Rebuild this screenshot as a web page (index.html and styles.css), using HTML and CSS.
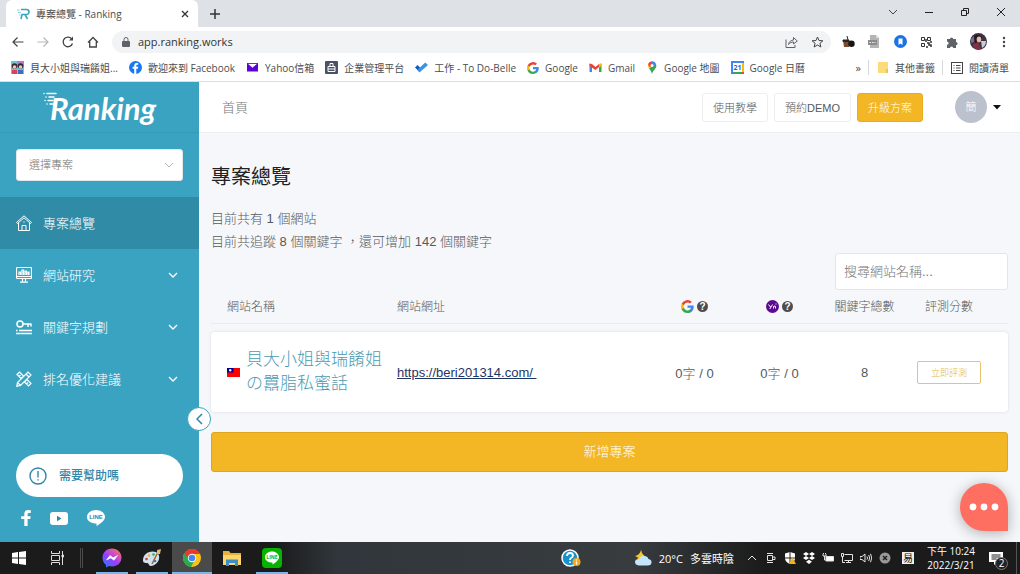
FILE: index.html
```html
<!DOCTYPE html>
<html lang="zh-Hant">
<head>
  <meta charset="UTF-8" />
  <meta name="viewport" content="width=device-width, initial-scale=1.0"/>
  <title>專案總覽 - Ranking</title>
  <link rel="stylesheet" href="styles.css">
</head>
<body>
  <!-- Browser -->
  <header class="browser">
    <div class="tab-strip">
      <div class="tab">
        <svg width="13" height="12" viewBox="0 0 13 12" fill="none" stroke="#3aa3c2" stroke-width="1.6"><path d="M4 1.5h5.500a2.200 2.200 0 0 1 0 5H5L4 11M8 6.500l2.500 4.500"/><path d="M0 2h2.500M1 4.500h3M2 7h1.500" stroke="#8fcbdc" stroke-width="1"/></svg>
        <span class="tab-title">專案總覽 - Ranking</span>
        <button class="plain" aria-label="Close tab"><svg width="8" height="8" viewBox="0 0 8 8" stroke="#333" stroke-width="1.3"><path d="M1 1l6 6M7 1L1 7"/></svg></button>
      </div>
      <button class="plain new-tab" aria-label="New tab"><svg width="10" height="10" viewBox="0 0 10 10" stroke="#333" stroke-width="1.5"><path d="M5 0v10M0 5h10"/></svg></button>
      <div class="window-buttons">
        <button class="plain" aria-label="Search tabs"><svg width="10" height="10" viewBox="0 0 10 10" fill="none" stroke="#444"><path d="M1 3l4 4 4-4"/></svg></button>
        <button class="plain" aria-label="Minimize"><svg width="10" height="10" viewBox="0 0 10 10" stroke="#222"><path d="M1 5.500h8"/></svg></button>
        <button class="plain" aria-label="Restore"><svg width="10" height="10" viewBox="0 0 10 10" fill="none" stroke="#222"><path d="M1.500 3.500h5v5h-5zM3.500 3.500v-2h5v5h-2"/></svg></button>
        <button class="plain" aria-label="Close"><svg width="10" height="10" viewBox="0 0 10 10" stroke="#222"><path d="M1 1l8 8M9 1L1 9"/></svg></button>
      </div>
    </div>

    <div class="toolbar">
      <div class="nav-buttons">
        <button class="plain" aria-label="Back"><svg width="12" height="12" viewBox="0 0 12 12" fill="none" stroke="#444" stroke-width="1.2"><path d="M11.500 6H1M5.500 1.500L1 6l4.500 4.500"/></svg></button>
        <button class="plain" aria-label="Forward"><svg width="12" height="12" viewBox="0 0 12 12" fill="none" stroke="#b5b7ba" stroke-width="1.2"><path d="M.5 6H11M6.500 1.500L11 6l-4.500 4.500"/></svg></button>
        <button class="plain" aria-label="Reload"><svg width="12" height="12" viewBox="0 0 12 12" fill="none" stroke="#444" stroke-width="1.3"><path d="M10.500 7.500A4.800 4.800 0 1 1 10 3.300"/><path d="M11 .5V4.500H7z" fill="#444" stroke="none"/></svg></button>
        <button class="plain" aria-label="Home"><svg width="12" height="12" viewBox="0 0 12 12" fill="none" stroke="#444" stroke-width="1.3"><path d="M1 6.500L6 1.500l5 5M2.700 5.500V11h6.600V5.500"/></svg></button>
      </div>
      <div class="omnibox">
        <svg width="8" height="10" viewBox="0 0 8 10"><rect y="4" width="8" height="6" rx="1" fill="#5f6368"/><path d="M2 4V2.500a2 2 0 0 1 4 0V4" fill="none" stroke="#5f6368"/></svg>
        <input type="text" value="app.ranking.works" aria-label="Address">
        <button class="plain" aria-label="Share"><svg width="13" height="12" viewBox="0 0 13 12" fill="none" stroke="#5f6368"><path d="M1 3.500v8h9V9"/><path d="M3.500 8.500C4 5.500 6 4.200 8.500 4V1.500L12.300 5 8.500 8V6C6.500 6 4.800 6.700 3.500 8.500z"/></svg></button>
        <button class="plain" aria-label="Bookmark"><svg width="13" height="12" viewBox="0 0 13 12" fill="none" stroke="#444"><path d="M6.500 1l1.500 3.500 3.900.3-3 2.500 1 3.700-3.400-2-3.400 2 1-3.700-3-2.500 3.900-.3z"/></svg></button>
      </div>
      <div class="extensions">
        <button class="plain" aria-label="Extension"><svg width="13" height="13" viewBox="0 0 13 13"><path d="M1 5.500h6V12H2z" fill="#7a4a34"/><path d="M1 5h6v1.500H1zM5 1l1 4" stroke="#2b2523" fill="#2b2523"/><circle cx="9.500" cy="8.800" r="3.200" fill="#161616"/></svg></button>
        <button class="plain" aria-label="Extension"><svg width="12" height="13" viewBox="0 0 12 13"><path d="M2 0h6l3 3v10H2z" fill="#b4b4b4"/><path d="M8 0v3h3" fill="#ddd"/><rect y="5" width="9" height="5" fill="#8c8c8c"/><path d="M1.500 7.500h6" stroke="#eee" stroke-dasharray="1.500 1"/></svg></button>
        <button class="plain" aria-label="Extension"><svg width="13" height="13" viewBox="0 0 13 13"><circle cx="6.500" cy="6.500" r="6.500" fill="#1a73e8"/><path d="M4.500 3.500h4V10l-2-1.500-2 1.500z" fill="#fff"/></svg></button>
        <button class="plain" aria-label="Extension"><svg width="12" height="12" viewBox="0 0 12 12" fill="none" stroke="#333"><path d="M1.500 1.500h3v3h-3zM7.500 1.500h3v3h-3zM1.500 7.500h3v3h-3z"/><path d="M7 7h2v2h2v2M7 10v2M10 6h2M6 3v3" stroke-width="1.500"/></svg></button>
        <button class="plain" aria-label="Extensions"><svg width="12" height="12" viewBox="0 0 12 12" fill="#5f6368"><path d="M1 3h3a1.600 1.600 0 1 1 3.200 0H10v3a1.600 1.600 0 1 1 0 3.200V12H7.200a1.600 1.600 0 1 0-3.200 0H1V8.800a1.600 1.600 0 1 0 0-3.200z"/></svg></button>
        <button class="plain" aria-label="Profile"><svg width="17" height="17" viewBox="0 0 17 17"><circle cx="8.500" cy="8.500" r="8.500" fill="#3d3443"/><path d="M4 3q4-3 8 1v6H5z" fill="#241b22"/><ellipse cx="9" cy="6.500" rx="2.300" ry="3" fill="#e6bba8"/><path d="M3 11l5-2 3 7q-5 2-8-2z" fill="#862f42"/><path d="M11 8l5 0q0 5-4 7z" fill="#c9ccdb"/><path d="M1 6l3-3v6L1 10z" fill="#7e6a8c"/></svg></button>
        <button class="plain" aria-label="Menu"><svg width="4" height="12" viewBox="0 0 4 12" fill="#444"><circle cx="2" cy="2" r="1.200"/><circle cx="2" cy="6" r="1.200"/><circle cx="2" cy="10" r="1.200"/></svg></button>
      </div>
    </div>

    <nav class="bookmarks">
      <a href="#"><svg width="13" height="13" viewBox="0 0 13 13"><path d="M0 0h13v13H0z" fill="#69c8cf"/><path d="M6 0h7v6H6z" fill="#b97cc9"/><circle cx="3.500" cy="5" r="2.800" fill="#3a2730"/><circle cx="9.500" cy="5" r="2.800" fill="#2f2540"/><circle cx="3.500" cy="6" r="1.800" fill="#f3c4b0"/><circle cx="9.500" cy="6" r="1.800" fill="#f3c4b0"/><path d="M1 13V9h5v4z" fill="#d8435b"/><path d="M7 13V9h5v4z" fill="#3f6bc0"/></svg>貝大小姐與瑞餚姐...</a>
      <a href="#"><svg width="13" height="13" viewBox="0 0 13 13"><circle cx="6.500" cy="6.500" r="6.500" fill="#1877f2"/><path d="M9.200 3.700H8.100q-.8 0-.8 1v1.100h1.900L8.900 7.800H7.300V13H5.200V7.800H3.600V5.800h1.600V4.400Q5.200 2 7.600 2h1.600z" fill="#fff"/></svg>歡迎來到 Facebook</a>
      <a href="#"><svg width="13" height="13" viewBox="0 0 13 13"><path d="M1 2.500h11v8H1z" fill="#6001d2"/><path d="M1 2.500h11L6.500 7z" fill="#fff" stroke="#6001d2" stroke-width=".8"/></svg>Yahoo信箱</a>
      <a href="#"><svg width="13" height="13" viewBox="0 0 13 13" fill="none" stroke="#fff"><rect width="13" height="13" rx="1" fill="#4a5364" stroke="none"/><path d="M3 5.500h7v5H3zM5 5.500v-3h3v3M3 8h7"/></svg>企業管理平台</a>
      <a href="#"><svg width="13" height="13" viewBox="0 0 13 13"><path d="M0 6.500l2.500-2.500L6 7.500 4.500 11z" fill="#195abd"/><path d="M4.500 11.500L2.300 9 10.200 1.500 13 4z" fill="#3994e6"/></svg>工作 - To Do-Belle</a>
      <a href="#"><svg width="12" height="12" viewBox="0 0 24 24"><path fill="#4285f4" d="M23.500 12.300c0-.8-.1-1.600-.2-2.300H12v4.500h6.500a5.600 5.600 0 0 1-2.400 3.600v3h3.900c2.200-2.100 3.500-5.100 3.500-8.800z"/><path fill="#34a853" d="M12 24c3.200 0 6-1.100 8-2.900l-3.900-3a7.200 7.200 0 0 1-10.800-3.800h-4v3.100A12 12 0 0 0 12 24z"/><path fill="#fbbc05" d="M5.300 14.300a7.200 7.200 0 0 1 0-4.600V6.600h-4a12 12 0 0 0 0 10.800z"/><path fill="#ea4335" d="M12 4.800c1.800 0 3.300.6 4.600 1.800L20 3.200A12 12 0 0 0 1.300 6.600l4 3.100A7.200 7.200 0 0 1 12 4.800z"/></svg>Google</a>
      <a href="#"><svg width="13" height="13" viewBox="0 0 13 13"><path d="M.5 3v8H3V4z" fill="#4285f4"/><path d="M12.500 3v8H10V4z" fill="#34a853"/><path d="M.5 2.500L3 3l3.500 3L10 3v3L6.500 9 .5 5z" fill="#ea4335"/><path d="M10 3l2.500-1v3L10 6.500z" fill="#fbbc05"/></svg>Gmail</a>
      <a href="#"><svg width="12" height="13" viewBox="0 0 12 13"><path d="M6 13Q5.500 10 3 7.500L9.800 2.400Q11.200 5.500 9 8 6.500 10.500 6 13z" fill="#34a853"/><path d="M3 7.600Q1.300 5.500 2 3L5 5z" fill="#fbbc05"/><path d="M2 3Q3 .7 5.500.2L7 3 4 6.500z" fill="#ea4335"/><path d="M5.500.2Q8.800 0 9.900 2.500L6.500 6 5 3z" fill="#4285f4"/><circle cx="6" cy="4.400" r="1.500" fill="#fff"/></svg>Google 地圖</a>
      <a href="#"><svg width="13" height="13" viewBox="0 0 13 13"><path d="M0 0h13v13H0z" fill="#4285f4"/><path d="M11 2h2v9h-2z" fill="#fbbc05"/><path d="M2 11h9v2H2z" fill="#34a853"/><path d="M11 11h2l-2 2z" fill="#ea4335"/><path d="M2 2h9v9H2z" fill="#fff"/><text x="6.500" y="9" text-anchor="middle" font-size="7" font-weight="bold" fill="#1967d2">21</text></svg>Google 日曆</a>
      <div class="bookmarks-end">
        <span class="more">»</span>
        <a href="#"><svg width="12" height="13" viewBox="0 0 12 13"><path d="M1 1h10v8l-1 3H1z" fill="#fbdc78"/><path d="M9 8h2v4H9z" fill="#eec34e"/></svg>其他書籤</a>
        <a href="#"><svg width="12" height="12" viewBox="0 0 12 12" fill="none" stroke="#444"><rect x=".5" y=".5" width="11" height="11"/><path d="M2.500 3.500h1M5 3.500h4.500M2.500 6h1M5 6h4.500M2.500 8.500h1M5 8.500h4.500"/></svg>閱讀清單</a>
      </div>
    </nav>
  </header>

  <!-- Ranking app -->
  <div class="app">
    <aside class="sidebar">
      <a class="logo" href="#">
        <svg width="14" height="20" viewBox="0 0 14 20" stroke="#fff" stroke-width="1.500" stroke-linecap="round"><path d="M4 2.500h9M1 2.500h.1M6 6h5M3 6h.1M5 9.500h5M2 9.500h.1M7 13h3M4 13h.1"/></svg>
        <span>Ranking</span>
      </a>
      <div class="project-select">
        <select aria-label="選擇專案"><option>選擇專案</option></select>
        <svg width="10" height="6" viewBox="0 0 10 6" fill="none" stroke="#b4b8bd"><path d="M1 1l4 4 4-4"/></svg>
      </div>
      <nav class="menu">
        <a class="active" href="#">
          <svg width="16" height="16" viewBox="0 0 16 16" fill="none" stroke="#fff"><path d="M.5 7.500L8 .8l7.500 6.700-1 1L8 2.800 1.500 8.500zM2.500 8v7.500h11V8M6 15.500v-5h4v5M7.300 7h1.400"/></svg>
          <span>專案總覽</span>
        </a>
        <a href="#">
          <svg width="16" height="16" viewBox="0 0 16 16" fill="none" stroke="#fff" stroke-width="1.200"><rect x=".5" y=".5" width="15" height="11" rx="1"/><path d="M1 9.500h14M6.500 11.500v3M9.500 11.500v3M4 15.200h8M3 8V5h1.500v3M6 8V3h1.500v5M9 8V4h1.500v4M12 8V5h1v3"/></svg>
          <span>網站研究</span>
          <svg class="chevron" width="10" height="6" viewBox="0 0 10 6"><path d="M1 1l4 4 4-4"/></svg>
        </a>
        <a href="#">
          <svg width="16" height="16" viewBox="0 0 16 16" fill="none" stroke="#fff" stroke-width="1.500"><circle cx="4" cy="5" r="3"/><path d="M7 5h8.500M12 5v3M15 5v2.500M0 11.500h1.500M3 11.500h13M0 14.500h16"/></svg>
          <span>關鍵字規劃</span>
          <svg class="chevron" width="10" height="6" viewBox="0 0 10 6"><path d="M1 1l4 4 4-4"/></svg>
        </a>
        <a href="#">
          <svg width="16" height="16" viewBox="0 0 16 16" fill="none" stroke="#fff" stroke-width="1.200"><path d="M1 3.500L3.500 1l4 4L5 7.500zM8.500 11L11 8.500l4 4-2.500 2.500zM3 5.500L4.500 4M10.500 13l1.500-1.500M.8 15.200l.7-3.700L12 1l3 3L4.500 14.500zM10 3l3 3M1.500 11.500l3 3"/></svg>
          <span>排名優化建議</span>
          <svg class="chevron" width="10" height="6" viewBox="0 0 10 6"><path d="M1 1l4 4 4-4"/></svg>
        </a>
      </nav>
      <button class="help">
        <svg width="18" height="18" viewBox="0 0 18 18" fill="none" stroke="#3187a8" stroke-width="1.400"><circle cx="9" cy="9" r="8"/><path d="M9 4v6.500M9 12.200v1.300"/></svg>
        <span>需要幫助嗎</span>
      </button>
      <div class="social">
        <a href="#" aria-label="Facebook"><svg width="10" height="16" viewBox="0 0 10 16" fill="#fff"><path d="M9.800.2v2.900H8Q6.600 3.100 6.600 4.500v1.700h3.100l-.5 2.900H6.600V16H3.300V9.100H.2V6.200h3.100V3.900Q3.300 0 7.300 0z"/></svg></a>
        <a href="#" aria-label="YouTube"><svg width="18" height="13" viewBox="0 0 18 13"><rect width="18" height="13" rx="3" fill="#fff"/><path d="M7 3.800l4.500 2.700L7 9.200z" fill="#3187a8"/></svg></a>
        <a href="#" aria-label="LINE"><svg width="18" height="16" viewBox="0 0 18 16"><path d="M9 0c5 0 9 3 9 7 0 3-3.500 6-8.500 9v-2.500C4 13.500 0 11 0 7c0-4 4-7 9-7z" fill="#fff"/><text x="9" y="9.200" text-anchor="middle" font-size="6" font-weight="bold" fill="#3187a8">LINE</text></svg></a>
      </div>
      <button class="collapse" aria-label="Collapse menu"><svg width="8" height="12" viewBox="0 0 8 12" fill="none" stroke="#3187a8" stroke-width="1.500"><path d="M7 1L2 6l5 5"/></svg></button>
    </aside>

    <div class="page">
      <div class="topbar">
        <a class="home" href="#">首頁</a>
        <button class="btn">使用教學</button>
        <button class="btn">預約DEMO</button>
        <button class="btn btn-upgrade">升級方案</button>
        <button class="plain account"><span class="avatar">簡</span><svg width="8" height="5" viewBox="0 0 8 5"><path d="M0 0h8L4 4.500z" fill="#111"/></svg></button>
      </div>

      <main class="content">
        <h1>專案總覽</h1>
        <p>目前共有 1 個網站</p>
        <p>目前共追蹤 8 個關鍵字 ，還可增加 142 個關鍵字</p>
        <input class="search" type="text" placeholder="搜尋網站名稱..." aria-label="搜尋網站名稱">

        <table class="sites">
          <thead>
            <tr>
              <th class="col-name">網站名稱</th>
              <th>網站網址</th>
              <th class="col-num">
                <span class="engine">
                  <svg width="13" height="13" viewBox="0 0 24 24"><path fill="#4285f4" d="M23.500 12.300c0-.8-.1-1.600-.2-2.300H12v4.500h6.500a5.600 5.600 0 0 1-2.400 3.600v3h3.900c2.200-2.100 3.500-5.100 3.500-8.800z"/><path fill="#34a853" d="M12 24c3.200 0 6-1.100 8-2.900l-3.900-3a7.200 7.200 0 0 1-10.800-3.800h-4v3.100A12 12 0 0 0 12 24z"/><path fill="#fbbc05" d="M5.300 14.300a7.200 7.200 0 0 1 0-4.600V6.600h-4a12 12 0 0 0 0 10.800z"/><path fill="#ea4335" d="M12 4.800c1.800 0 3.300.6 4.600 1.800L20 3.200A12 12 0 0 0 1.300 6.600l4 3.100A7.200 7.200 0 0 1 12 4.800z"/></svg>
                  <span class="hint">?</span>
                </span>
              </th>
              <th class="col-num">
                <span class="engine">
                  <svg width="13" height="13" viewBox="0 0 13 13" fill="none" stroke="#fff"><circle cx="6.500" cy="6.500" r="6.500" fill="#5c0a8f" stroke="none"/><path d="M2.500 4.500l2 2.500M6.500 4.500L3.800 9M7.500 8.500V6.500q2-1.500 2 .5v1.500M10 3.500v1"/></svg>
                  <span class="hint">?</span>
                </span>
              </th>
              <th class="col-num">關鍵字總數</th>
              <th class="col-score">評測分數</th>
            </tr>
          </thead>
          <tbody>
            <tr>
              <td>
                <div class="site">
                  <svg width="13" height="9" viewBox="0 0 13 9"><path d="M0 0h13v9H0z" fill="#fe0000"/><path d="M0 0h6.500v4.500H0z" fill="#000095"/><circle cx="3.200" cy="2.200" r="1.200" fill="#fff"/></svg>
                  <a href="#">貝大小姐與瑞餚姐の囂脂私蜜話</a>
                </div>
              </td>
              <td><a class="url" href="https://beri201314.com/">https://beri201314.com/&nbsp;</a></td>
              <td class="col-num">0字 / 0</td>
              <td class="col-num">0字 / 0</td>
              <td class="col-num">8</td>
              <td class="col-score"><button class="btn-score">立即評測</button></td>
            </tr>
          </tbody>
        </table>
        <button class="btn-add">新增專案</button>
      </main>
      <button class="chat" aria-label="Chat"><svg width="30" height="8" viewBox="0 0 30 8" fill="#fff"><circle cx="4" cy="4" r="3.400"/><circle cx="15" cy="4" r="3.400"/><circle cx="26" cy="4" r="3.400"/></svg></button>
    </div>
  </div>

  <!-- Taskbar -->
  <footer class="taskbar">
    <div class="tasks">
      <button class="plain start" aria-label="Start"><svg width="14" height="14" viewBox="0 0 14 14" fill="#fff"><path d="M0 2l6-1v5.500H0zM7 .9L14 0v6.500H7zM0 7.500h6V13l-6-1zM7 7.500h7V14l-7-1z"/></svg></button>
      <button class="plain start" aria-label="Task view"><svg width="14" height="14" viewBox="0 0 14 14" fill="none" stroke="#ddd"><path d="M1.500 4.500h8v5h-8zM1.500 0v2.500h8V0M1.500 14v-2.500h8V14M12.500 0v14"/><path d="M12 4h1.500v2H12z" fill="#fff"/></svg></button>
      <span class="divider"></span>
      <button class="plain open" aria-label="Messenger"><svg width="20" height="20" viewBox="0 0 20 20"><defs><linearGradient id="msg" x1="0" y1="1" x2=".8" y2="0"><stop offset="0" stop-color="#0a84ff"/><stop offset=".5" stop-color="#9b3dff"/><stop offset="1" stop-color="#ff6b6b"/></linearGradient></defs><path d="M10 .5c5.500 0 9.500 4 9.500 9s-4 9-9.500 9q-1.500 0-3-.4L4 19.500V17C1.700 15.200.5 12.500.5 9.500c0-5 4-9 9.500-9z" fill="url(#msg)"/><path d="M4.500 12L8 7.500l3.200 2.300 4.300-2.300-3.500 4.700-3.200-2.300z" fill="#fff" stroke="#fff" stroke-width=".6"/></svg></button>
      <button class="plain open" aria-label="Paint"><svg width="20" height="18" viewBox="0 0 20 18"><path d="M1 11c0-5 4.500-8.500 9.500-8.500S18 6 17 10s-5 7-8 7-1.500-3-4-3-4 0-4-3z" fill="#cfe2f0"/><circle cx="4.500" cy="10" r="1.300" fill="#e13c32"/><circle cx="7" cy="6.500" r="1.300" fill="#f2b632"/><circle cx="11.500" cy="5.500" r="1.300" fill="#49a54c"/><circle cx="13" cy="12" r="1.300" fill="#2d73c8"/><path d="M10 15L15.500 4" stroke="#a6682e" stroke-width="1.500"/><path d="M15 5l0-4 4-1-1 5z" fill="#e0b877"/></svg></button>
      <button class="plain open current" aria-label="Chrome"><svg width="18" height="18" viewBox="0 0 18 18"><circle cx="9" cy="9" r="9" fill="#fbc116"/><path d="M1.200 4.500A9 9 0 0 0 8 18l4-7.500L9 9z" fill="#2da94f"/><path d="M1.200 4.500L5 9l4-4h8A9 9 0 0 0 1.200 4.500z" fill="#e33b2e"/><circle cx="9" cy="9" r="4.200" fill="#fff"/><circle cx="9" cy="9" r="3.300" fill="#4285f4"/></svg></button>
      <button class="plain" aria-label="File Explorer"><svg width="18" height="15" viewBox="0 0 18 15"><path d="M0 0h6l1.500 2H18v12H0z" fill="#e9ae3c"/><path d="M0 4h18v10H0z" fill="#fbd76b"/><path d="M3 15V8.500h12V15h-3v-3H6v3z" fill="#3f8fc6"/></svg></button>
      <button class="plain open" aria-label="LINE"><svg width="20" height="20" viewBox="0 0 20 20"><rect width="20" height="20" rx="4" fill="#06b400"/><path d="M10 3.500c4 0 7 2.500 7 5.700 0 2.500-3 5-6.500 7.300v-2C6 14.500 3 12.300 3 9.200c0-3.200 3-5.700 7-5.700z" fill="#fff"/><text x="10" y="11" text-anchor="middle" font-size="5" font-weight="bold" fill="#06b400">LINE</text></svg></button>
    </div>
    <div class="tray">
      <svg class="assist" width="20" height="18" viewBox="0 0 20 18"><circle cx="9" cy="9" r="8" fill="#1692cd" stroke="#fff" stroke-width="1.500"/><path d="M6 7q0-3 3-3t3 2.500q0 1.500-2 2.500-1 .6-1 2M9 12.500v1.500" fill="none" stroke="#fff" stroke-width="1.800"/><circle cx="15.500" cy="13" r="4" fill="#f4a81d"/><path d="M15.500 10.500v1M15.500 12.500v3" stroke="#fff" stroke-width="1.300"/></svg>
      <div class="weather">
        <svg width="18" height="16" viewBox="0 0 18 16"><path d="M7 0q3 5-2 8L1 6q5-1 6-6z" fill="#f7c630"/><path d="M3 8q4-1 5-5l4 5-5 3z" fill="#f7c630"/><path d="M5 15.500q-4-.5-4-3.500t4-3q2-4 6-3 3 .5 3.500 3 3 .5 3 3.300 0 3.200-4 3.200z" fill="#c5e5fa"/></svg>
        <span>20°C</span><span>多雲時陰</span>
      </div>
      <div class="tray-icons">
        <svg width="12" height="12" viewBox="0 0 12 12"><path d="M2 8l4-4 4 4"/></svg>
        <svg width="12" height="12" viewBox="0 0 12 12"><path d="M2.500 3.500h5v5h-5zM7.500 5H10v2.500H7.500M2 1.500h6M2 10.500h6"/></svg>
        <svg width="12" height="12" viewBox="0 0 12 12"><path d="M6 0l5 1.500V6q0 4-5 6Q1 10 1 6V1.500z" fill="#fff" stroke="none"/><path d="M6 0v12M1 6h10" stroke="#222"/><path d="M8.500 5.500L12 12H5z" fill="#f6b117" stroke="none"/></svg>
        <svg width="12" height="12" viewBox="0 0 12 12"><path d="M3 0l3 2-3 2-3-2zM9 0l3 2-3 2-3-2zM3 4l3 2-3 2-3-2zM9 4l3 2-3 2-3-2zM6 7.800l3 2L6 12 3 9.800z" fill="#fff" stroke="none"/></svg>
        <svg width="12" height="12" viewBox="0 0 12 12"><path d="M4 4.500h7.500v4.500H4z" fill="#fff"/><path d="M1 2v2h3V2M2.500 4v4H4M1.500 1v1M3.500 1v1"/></svg>
        <svg width="12" height="12" viewBox="0 0 12 12"><path d="M3.500 2.500h8v6h-8M7.500 8.500v2M5 10.500h5M.5 1.500h2v3h-2zM1.500 4.500v6H4"/></svg>
        <svg width="12" height="12" viewBox="0 0 12 12"><path d="M0 4.500h2L5 2v8L2 7.500H0zM7 4.500q1 1.500 0 3M8.700 3q2 3 0 6M10.500 1.800q2.500 4.200 0 8.400"/></svg>
        <svg width="12" height="12" viewBox="0 0 12 12"><circle cx="6" cy="6" r="5.500" fill="#999" stroke="none"/><path d="M4 4l4 4M8 4L4 8" stroke="#222" stroke-width="1.500"/></svg>
      </div>
      <span class="ime">易</span>
      <div class="clock"><span>下午 10:24</span><span>2022/3/21</span></div>
      <button class="plain notices" aria-label="Notifications"><svg width="14" height="13" viewBox="0 0 14 13"><path d="M0 0h14v10H8l-3 3v-3H0z" fill="#fff"/><path d="M2.500 3h9M2.500 5h9M2.500 7h5" stroke="#222"/></svg><span class="count">2</span></button>
    </div>
  </footer>
</body>
</html>
```
FILE: styles.css
```css
* {
  box-sizing: border-box;
}

body {
  margin: 0;
  min-height: 100vh;
  display: flex;
  flex-direction: column;
  font-family: "Liberation Sans", "Noto Sans CJK TC", sans-serif;
  font-size: 13px;
  font-weight: 300;
  color: #55595c;
}

a {
  color: inherit;
  text-decoration: none;
}

button, input, select {
  font: inherit;
  color: inherit;
}

button {
  cursor: pointer;
}

svg {
  flex: none;
}

.plain {
  display: flex;
  align-items: center;
  justify-content: center;
  padding: 0;
  border: none;
  background: none;
}

/* Browser */
.browser, .taskbar {
  font-family: "Open Sans", "Noto Sans CJK TC", sans-serif;
  font-size: 10px;
  font-weight: 400;
}

.browser {
  background: #fff;
  color: #4a4d51;
  border-bottom: 1px solid #dcdee0;
}

.tab-strip {
  display: flex;
  height: 27px;
  background: #dee1e6;
  padding: 0 1px 0 6px;
}

.tab {
  display: flex;
  align-items: center;
  gap: 6px;
  width: 192px;
  padding: 0 9px 0 11px;
  background: #fff;
  border-radius: 6px 6px 0 0;
}

.tab-title {
  flex: 1;
}

.new-tab {
  width: 34px;
}

.window-buttons {
  display: flex;
  margin-left: auto;
  height: 23px;
}

.window-buttons button {
  width: 36px;
}

.toolbar {
  display: flex;
  align-items: center;
  height: 29px;
  padding: 0 3px 0 5px;
}

.nav-buttons, .extensions {
  display: flex;
}

.nav-buttons {
  margin-right: 7px;
}

.nav-buttons button {
  width: 25px;
}

.omnibox {
  flex: 1;
  display: flex;
  align-items: center;
  gap: 8px;
  height: 22px;
  padding: 0 5px 0 10px;
  background: #f1f3f4;
  border-radius: 11px;
}

.omnibox input {
  flex: 1;
  padding: 0;
  border: none;
  outline: none;
  background: none;
  font-size: 11px;
  color: #333;
}

.omnibox button {
  width: 18px;
}

.extensions {
  margin-left: 4px;
}

.extensions button {
  width: 26px;
}

.bookmarks {
  display: flex;
  align-items: center;
  gap: 11px;
  height: 25px;
  padding: 0 11px 2px;
  white-space: nowrap;
}

.bookmarks a {
  display: flex;
  align-items: center;
  gap: 6px;
}

.bookmarks-end {
  display: flex;
  align-items: center;
  gap: 7px;
  margin-left: auto;
}

.bookmarks-end a {
  border-left: 1px solid #d5d7da;
  padding-left: 8px;
}

.more {
  font-size: 11px;
}

/* App */
.app {
  flex: 1;
  display: flex;
}

.sidebar {
  position: relative;
  display: flex;
  flex-direction: column;
  width: 199px;
  background: #3aa3c2;
  color: #fff;
}

.logo {
  display: flex;
  justify-content: center;
  height: 51px;
  padding-top: 9px;
  border-bottom: 1px solid #3599b7;
  font-family: Lato, sans-serif;
  font-size: 31px;
  font-weight: 700;
  font-style: italic;
  line-height: 34px;
}

.logo svg {
  margin-right: -7px;
}

.project-select {
  position: relative;
  margin: 16px;
}

.project-select select {
  display: block;
  width: 100%;
  height: 32px;
  padding: 0 12px;
  border: 1px solid #e4e7ea;
  border-radius: 3px;
  background: #fff;
  appearance: none;
  font-size: 11px;
  color: #777;
}

.project-select svg {
  position: absolute;
  right: 9px;
  top: 13px;
  pointer-events: none;
}

.menu a {
  display: flex;
  align-items: center;
  gap: 11px;
  height: 52px;
  padding: 0 21px 0 16px;
}

.menu .active {
  background: #2f8ba6;
}

.menu span, .help span, .home {
  padding-bottom: 2px;
}

.chevron {
  margin-left: auto;
  fill: none;
  stroke: #fff;
  stroke-width: 1.3;
}

.help {
  display: flex;
  align-items: center;
  gap: 12px;
  height: 43px;
  margin: auto 16px 0;
  padding: 0 13px;
  border: none;
  border-radius: 22px;
  background: #fff;
  color: #3187a8;
  font-size: 12px;
  font-weight: 500;
}

.social {
  display: flex;
  align-items: center;
  gap: 19px;
  padding: 13px 21px 16px;
}

.social a {
  display: flex;
}

.collapse {
  position: absolute;
  right: -12px;
  bottom: 111px;
  width: 24px;
  height: 24px;
  display: flex;
  align-items: center;
  justify-content: center;
  padding: 0;
  border: 1px solid #3aa3c2;
  border-radius: 50%;
  background: #fff;
  z-index: 1;
}

.page {
  position: relative;
  flex: 1;
  background: #f6f7fa;
}

.topbar {
  display: flex;
  align-items: center;
  gap: 6px;
  height: 51px;
  padding: 0 19px 0 23px;
  background: #fff;
  border-bottom: 1px solid #eceef0;
}

.home {
  margin-right: auto;
  color: #777;
}

.btn {
  height: 29px;
  padding: 0 10px;
  border: 1px solid #eceef0;
  border-radius: 3px;
  background: #fff;
  font-size: 11px;
}

.btn-upgrade {
  border-color: #e9ac1e;
  background: #f3b624;
  color: #fff;
}

.account {
  gap: 6px;
  margin-left: 26px;
}

.avatar {
  width: 32px;
  height: 32px;
  border-radius: 50%;
  background: #bcc1ce;
  color: #fff;
  font-size: 11px;
  line-height: 32px;
}

.content {
  display: flex;
  flex-direction: column;
  padding: 30px 12px 0;
}

h1 {
  margin: 0 0 16px;
  font-size: 20px;
  font-weight: 400;
  line-height: 28px;
  color: #222;
}

p {
  margin: 0;
  line-height: 23px;
}

.search {
  align-self: flex-end;
  width: 173px;
  height: 37px;
  padding: 0 8px;
  border: 1px solid #e2e5e9;
  border-radius: 3px;
  background: #fff;
}

.search::placeholder {
  color: #757575;
}

.sites {
  width: 100%;
  table-layout: fixed;
  border-collapse: separate;
  border-spacing: 0 8px;
  text-align: left;
}

.sites th {
  height: 26px;
  padding: 0 0 8px 16px;
  border-bottom: 1px solid #e8eaed;
  font-size: 12px;
  font-weight: 300;
  line-height: 16px;
}

.sites td {
  height: 80px;
  padding: 0 0 0 16px;
  background: #fff;
}

.sites tbody tr {
  border-radius: 4px;
  box-shadow: 0 0 3px rgba(0, 0, 0, 0.12);
}

.sites td:first-child {
  border-radius: 4px 0 0 4px;
}

.sites td:last-child {
  border-radius: 0 4px 4px 0;
}

.sites .col-name {
  width: 170px;
}

.sites .col-num {
  width: 85px;
  padding-left: 0;
  text-align: center;
}

.sites .col-score {
  width: 101px;
  padding-left: 0;
  padding-right: 17px;
  text-align: center;
}

.engine {
  display: flex;
  align-items: center;
  justify-content: center;
  gap: 3px;
}

.hint {
  width: 11px;
  height: 11px;
  border-radius: 50%;
  background: #4d4d4d;
  color: #fff;
  font-size: 10px;
  font-weight: 700;
  line-height: 11px;
}

.site {
  display: flex;
  align-items: center;
  gap: 6px;
  font-size: 17px;
  line-height: 24px;
  color: #4c9bb3;
}

.site a {
  flex: none;
  width: 136px;
}

.url {
  color: #1f3564;
  text-decoration: underline;
}

.btn-score {
  width: 64px;
  height: 23px;
  padding: 0;
  border: 1px solid #e6c370;
  border-radius: 2px;
  background: #fff;
  color: #e3b54a;
  font-size: 9px;
}

.btn-add {
  height: 40px;
  margin-top: 12px;
  padding: 0 0 3px;
  border: 1px solid #e0a51c;
  border-radius: 3px;
  background: #f3b624;
  color: #fff;
}

.chat {
  position: absolute;
  right: 12px;
  bottom: 11px;
  width: 48px;
  height: 48px;
  display: flex;
  align-items: center;
  justify-content: center;
  padding: 0;
  border: none;
  border-radius: 24px 24px 0 24px;
  background: #ff6f61;
  box-shadow: 0 2px 14px rgba(0, 0, 0, 0.3);
}

/* Taskbar */
.taskbar {
  display: flex;
  justify-content: space-between;
  height: 32px;
  background: linear-gradient(90deg, #1b1b1b 27%, #30363b 33%, #383c3f 62%, #1b1b1b 75%);
  color: #fff;
}

.tasks, .tray, .tray-icons, .weather {
  display: flex;
  align-items: center;
}

.tasks button {
  width: 40px;
  height: 32px;
}

.tasks .start {
  width: 38px;
}

.tasks .open {
  background: linear-gradient(#76b9ed, #76b9ed) bottom / 32px 2px no-repeat;
}

.tasks .current {
  background-color: #4a4a4a;
  background-size: 40px 2px;
}

.divider {
  width: 3px;
  height: 20px;
  margin: 0 9px 0 4px;
  border: 1px solid #4a4a4a;
  border-width: 0 1px;
}

.assist {
  margin-right: 53px;
}

.weather {
  gap: 7px;
  margin-right: 12px;
  font-size: 11px;
}

.tray-icons {
  gap: 7px;
}

.tray-icons svg {
  fill: none;
  stroke: #e4e4e4;
}

.ime {
  width: 12px;
  height: 12px;
  margin: 0 13px 0 11px;
  background: #f0f0f0;
  color: #111;
  line-height: 12px;
  text-align: center;
}

.clock {
  display: flex;
  flex-direction: column;
  align-items: center;
  line-height: 14px;
}

.notices {
  position: relative;
  width: 42px;
  height: 32px;
  margin-right: 3px;
  border-right: 1px solid #555;
}

.count {
  position: absolute;
  left: 20px;
  top: 15px;
  width: 13px;
  height: 13px;
  border: 1px solid #777;
  border-radius: 50%;
  background: #222;
  color: #fff;
  line-height: 11px;
}
```
